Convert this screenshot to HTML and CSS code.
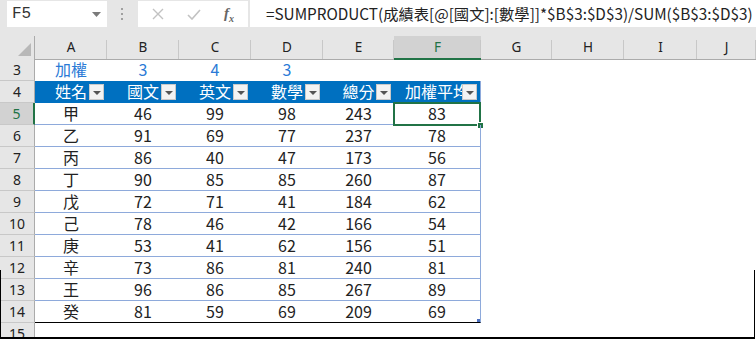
FILE: index.html
```html
<!DOCTYPE html>
<html lang="zh-Hant">
  <head>
    <meta charset="UTF-8" />
    <title>成績表</title>
    <link rel="stylesheet" href="styles.css">
  </head>
  <body>
    <div class="topbar">
      <div class="namebox">
        <span>F5</span>
        <svg class="nb-arrow" width="9" height="5" viewBox="0 0 9 5"><path d="M0 0h9L4.5 5z" fill="#7a7a7a"/></svg>
      </div>
      <div class="grip">
        <svg width="3" height="12" viewBox="0 0 3 12"><rect x="0" y="0" width="2" height="2" fill="#a0a0a0"/><rect x="0" y="5" width="2" height="2" fill="#a0a0a0"/><rect x="0" y="10" width="2" height="2" fill="#a0a0a0"/></svg>
      </div>
      <div class="fx-box">
        <svg class="ico" width="12" height="12" viewBox="0 0 12 12"><path d="M1 1L11 11M11 1L1 11" stroke="#c2c2c2" stroke-width="1.4" fill="none"/></svg>
        <svg class="ico" width="14" height="11" viewBox="0 0 14 11"><path d="M1 6L5 10L13 1" stroke="#c2c2c2" stroke-width="1.6" fill="none"/></svg>
        <span class="fx">f<sub>x</sub></span>
      </div>
      <div class="formula">=SUMPRODUCT(成績表[@[國文]:[數學]]*$B$3:$D$3)/SUM($B$3:$D$3)</div>
    </div>

    <div class="sheet">
      <div class="row colhead">
        <div class="corner"><svg width="13" height="13" viewBox="0 0 13 13"><path d="M13 0V13H0z" fill="#b8b8b8"/></svg></div>
        <div class="ch">A</div><div class="ch">B</div><div class="ch">C</div><div class="ch">D</div>
        <div class="ch">E</div><div class="ch sel">F</div><div class="ch">G</div><div class="ch">H</div>
        <div class="ch">I</div><div class="ch">J</div>
      </div>

      <div class="row">
        <div class="rh">3</div>
        <div class="c blue">加權</div><div class="c blue">3</div><div class="c blue">4</div><div class="c blue">3</div>
        <div class="c"></div><div class="c"></div><div class="c"></div><div class="c"></div><div class="c"></div><div class="c"></div>
      </div>

      <div class="row">
        <div class="rh">4</div>
        <div class="c th">姓名<span class="filter"></span></div>
        <div class="c th">國文<span class="filter"></span></div>
        <div class="c th">英文<span class="filter"></span></div>
        <div class="c th">數學<span class="filter"></span></div>
        <div class="c th">總分<span class="filter"></span></div>
        <div class="c th last">加權平均<span class="filter"></span></div>
        <div class="c"></div><div class="c"></div><div class="c"></div><div class="c"></div>
      </div>

      <div class="row">
        <div class="rh sel">5</div>
        <div class="c td">甲</div><div class="c td">46</div><div class="c td">99</div><div class="c td">98</div><div class="c td">243</div>
        <div class="c td last active">83<span class="cursor"></span><span class="handle"></span></div>
        <div class="c"></div><div class="c"></div><div class="c"></div><div class="c"></div>
      </div>
      <div class="row">
        <div class="rh">6</div>
        <div class="c td">乙</div><div class="c td">91</div><div class="c td">69</div><div class="c td">77</div><div class="c td">237</div><div class="c td last">78</div>
        <div class="c"></div><div class="c"></div><div class="c"></div><div class="c"></div>
      </div>
      <div class="row">
        <div class="rh">7</div>
        <div class="c td">丙</div><div class="c td">86</div><div class="c td">40</div><div class="c td">47</div><div class="c td">173</div><div class="c td last">56</div>
        <div class="c"></div><div class="c"></div><div class="c"></div><div class="c"></div>
      </div>
      <div class="row">
        <div class="rh">8</div>
        <div class="c td">丁</div><div class="c td">90</div><div class="c td">85</div><div class="c td">85</div><div class="c td">260</div><div class="c td last">87</div>
        <div class="c"></div><div class="c"></div><div class="c"></div><div class="c"></div>
      </div>
      <div class="row">
        <div class="rh">9</div>
        <div class="c td">戊</div><div class="c td">72</div><div class="c td">71</div><div class="c td">41</div><div class="c td">184</div><div class="c td last">62</div>
        <div class="c"></div><div class="c"></div><div class="c"></div><div class="c"></div>
      </div>
      <div class="row">
        <div class="rh">10</div>
        <div class="c td">己</div><div class="c td">78</div><div class="c td">46</div><div class="c td">42</div><div class="c td">166</div><div class="c td last">54</div>
        <div class="c"></div><div class="c"></div><div class="c"></div><div class="c"></div>
      </div>
      <div class="row">
        <div class="rh">11</div>
        <div class="c td">庚</div><div class="c td">53</div><div class="c td">41</div><div class="c td">62</div><div class="c td">156</div><div class="c td last">51</div>
        <div class="c"></div><div class="c"></div><div class="c"></div><div class="c"></div>
      </div>
      <div class="row">
        <div class="rh">12</div>
        <div class="c td">辛</div><div class="c td">73</div><div class="c td">86</div><div class="c td">81</div><div class="c td">240</div><div class="c td last">81</div>
        <div class="c"></div><div class="c"></div><div class="c"></div><div class="c"></div>
      </div>
      <div class="row">
        <div class="rh">13</div>
        <div class="c td">王</div><div class="c td">96</div><div class="c td">86</div><div class="c td">85</div><div class="c td">267</div><div class="c td last">89</div>
        <div class="c"></div><div class="c"></div><div class="c"></div><div class="c"></div>
      </div>
      <div class="row">
        <div class="rh">14</div>
        <div class="c td end">癸</div><div class="c td end">81</div><div class="c td end">59</div><div class="c td end">69</div><div class="c td end">209</div>
        <div class="c td end last">69<span class="resize"></span></div>
        <div class="c"></div><div class="c"></div><div class="c"></div><div class="c"></div>
      </div>
      <div class="row">
        <div class="rh">15</div>
        <div class="c"></div><div class="c"></div><div class="c"></div><div class="c"></div><div class="c"></div>
        <div class="c"></div><div class="c"></div><div class="c"></div><div class="c"></div><div class="c"></div>
      </div>
    </div>

    <!-- frame of the screenshot, lower edge -->
    <div class="frame"></div>
  </body>
</html>
```

FILE: styles.css
```css
body {
  position: relative;
  margin: 0;
  width: 756px;
  height: 339px;
  overflow: hidden;
  background-color: #fff;
  font-family: "Noto Sans CJK TC", "Noto Sans", sans-serif;
}
.topbar {
  display: flex;
  align-items: flex-start;
  height: 36px;
  padding-top: 1px;
  box-sizing: border-box;
  background-color: #e6e6e6;
}
.namebox {
  display: flex;
  align-items: center;
  justify-content: space-between;
  margin-left: 7px;
  width: 100px;
  height: 26px;
  padding: 0 6px 0 5px;
  box-sizing: border-box;
  background-color: #fff;
  font-family: "Liberation Mono", monospace;
  font-size: 16px;
  color: #333;
}
.grip {
  display: flex;
  justify-content: center;
  align-items: center;
  width: 31px;
  height: 26px;
}
.fx-box {
  display: flex;
  align-items: center;
  width: 110px;
  height: 26px;
  background-color: #fff;
}
.fx-box .ico {
  margin-left: 14px;
  margin-right: 9px;
}
.fx {
  margin-left: 14px;
  font-family: "Liberation Serif", serif;
  font-style: italic;
  font-weight: bold;
  font-size: 15px;
  color: #666;
}
.fx sub {
  font-size: 10px;
}
.formula {
  flex: 1;
  margin-left: 2px;
  height: 27px;
  margin-top: -1px;
  padding-left: 16px;
  background-color: #fff;
  font-size: 15.3px;
  line-height: 27px;
  color: #222;
  white-space: nowrap;
  overflow: hidden;
}
.sheet {
  background-color: #fff;
}
.row {
  display: grid;
  grid-template-columns: 35px 72px 72px 72px 72px 71px 87px 71px 72px 73px 59px;
  height: 22px;
}
.colhead {
  height: 23px;
  background-color: #e6e6e6;
}
.corner {
  display: flex;
  align-items: flex-end;
  justify-content: flex-end;
  padding: 0 3px 3px 0;
  border-right: 1px solid #ababab;
  border-bottom: 1px solid #ababab;
}
.ch {
  position: relative;
  text-align: center;
  font-family: "Noto Sans", sans-serif;
  font-size: 13.5px;
  line-height: 22px;
  color: #222;
  border-bottom: 1px solid #ababab;
}
.ch::after {
  content: "";
  position: absolute;
  right: 0;
  top: 4px;
  bottom: 0;
  border-right: 1px solid #c8c8c8;
}
.ch.sel {
  background-color: #d2d2d2;
  color: #217346;
  border-bottom: 2px solid #217346;
}
.rh {
  text-align: center;
  background-color: #e6e6e6;
  font-family: "Noto Sans", sans-serif;
  font-size: 14px;
  line-height: 21px;
  color: #222;
  border-right: 1px solid #ababab;
  border-bottom: 1px solid #c8c8c8;
}
.rh.sel {
  background-color: #d2d2d2;
  color: #217346;
  border-right: 2px solid #217346;
}
.c {
  position: relative;
  box-sizing: border-box;
  text-align: center;
  font-size: 16px;
  line-height: 21px;
  color: #222;
}
.blue {
  color: #2a7ad6;
}
.th {
  background-color: #0070c0;
  color: #fff;
  white-space: nowrap;
}
.filter {
  position: absolute;
  right: 3px;
  top: 3px;
  width: 13px;
  height: 14px;
  background-color: #f3f3f3;
  border: 1px solid #c9c9c9;
}
.filter::after {
  content: "";
  position: absolute;
  left: 3px;
  top: 6px;
  border-left: 4px solid transparent;
  border-right: 4px solid transparent;
  border-top: 4px solid #555;
}
.td {
  border-bottom: 1px solid #8eaadb;
}
.td.end {
  border-bottom: 1px solid #000;
}
.last {
  border-right: 1px solid #8eaadb;
}
.cursor {
  position: absolute;
  left: -1px;
  top: -1px;
  right: -1px;
  bottom: -2px;
  border: 2px solid #217346;
}
.handle {
  position: absolute;
  right: -4px;
  bottom: -5px;
  width: 5px;
  height: 5px;
  background-color: #217346;
  border: 1px solid #fff;
}
.resize {
  position: absolute;
  right: 0;
  bottom: 0;
  width: 3px;
  height: 3px;
  background-color: #4b6fc1;
}
.frame {
  position: absolute;
  left: 0;
  right: 1px;
  top: 270px;
  bottom: 0;
  border: 1px solid #000;
  border-top: none;
  border-bottom-width: 2px;
  pointer-events: none;
}
```
